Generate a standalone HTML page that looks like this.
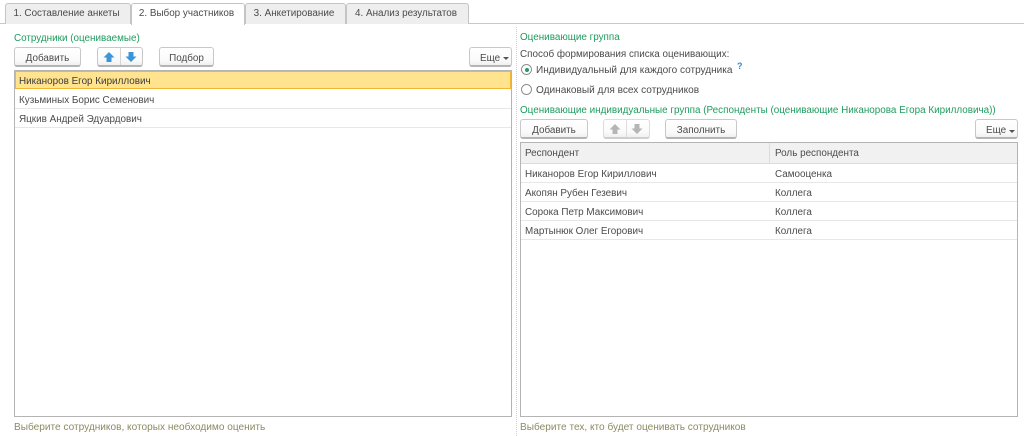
<!DOCTYPE html>
<html lang="ru"><head><meta charset="utf-8"><style>
html,body{margin:0;padding:0;background:#fff}
#p{position:relative;width:1024px;height:436px;overflow:hidden;background:#fff;font:9.9px/16px "Liberation Sans",sans-serif;color:#4b4b4b;filter:blur(.25px)}
#p div,#p span,#p svg{position:absolute;box-sizing:border-box}
.t{white-space:nowrap}
.g{color:#1f9c5e}
.h{color:#8d8a62;font-size:10.1px}
.tab{top:3px;height:21px;background:#eeeeee;border:1px solid #c4c4c4;border-bottom:0;border-radius:3px 3px 0 0;text-align:center;line-height:20px;white-space:nowrap;padding-right:3px}
.btn{background:linear-gradient(#fff,#fafafa 70%,#f0f0f0);border:1px solid #c8c8c8;border-bottom:2px solid #b4b4b4;border-radius:3px;text-align:center;line-height:18px;padding-top:2px;white-space:nowrap}
.line{height:1px;background:#e7e7e7}
.caret{width:0;height:0;border-left:3px solid transparent;border-right:3px solid transparent;border-top:3px solid #555}
</style></head><body><div id="p">
<div style="left:0;top:23px;width:1024px;height:1px;background:#c8c8c8"></div>
<div class="tab" style="left:5px;width:126px">1. Составление анкеты</div>
<div class="tab" style="left:131px;width:114px;background:#fff;height:22px;z-index:2">2. Выбор участников</div>
<div class="tab" style="left:245px;width:101px">3. Анкетирование</div>
<div class="tab" style="left:346px;width:123px">4. Анализ результатов</div>

<div class="t g" style="left:14px;top:31px">Сотрудники (оцениваемые)</div>
<div class="btn" style="left:14px;top:47px;width:67px;height:20px">Добавить</div>
<div class="btn" style="left:97px;top:47px;width:46px;height:20px"></div>
<div style="left:120px;top:48px;width:1px;height:17px;background:#d5d5d5"></div>
<svg style="left:103px;top:51px" width="12" height="12" viewBox="0 0 12 12"><path d="M6 1 L11.5 6.5 H8.5 V11 H3.5 V6.5 H.5 Z" fill="#3a96d6"/></svg>
<svg style="left:125px;top:51px" width="12" height="12" viewBox="0 0 12 12"><path d="M6 11 L11.5 5.5 H8.5 V1 H3.5 V5.5 H.5 Z" fill="#3a96d6"/></svg>
<div class="btn" style="left:159px;top:47px;width:55px;height:20px">Подбор</div>
<div class="btn" style="left:469px;top:47px;width:43px;height:20px;text-align:left;padding-left:10px">Еще</div>
<div class="caret" style="left:503px;top:57px"></div>

<div style="left:14px;top:70px;width:498px;height:347px;border:1px solid #b4b4b4;background:#fff"></div>
<div style="left:15px;top:71px;width:496px;height:18px;background:#ffe38f;border:1px solid #f2b632"></div>
<div class="t" style="left:19px;top:74px;color:#3c3c3c">Никаноров Егор Кириллович</div>
<div class="line" style="left:15px;top:108px;width:496px"></div>
<div class="t" style="left:19px;top:93px">Кузьминых Борис Семенович</div>
<div class="line" style="left:15px;top:127px;width:496px"></div>
<div class="t" style="left:19px;top:112px">Яцкив Андрей Эдуардович</div>
<div class="t h" style="left:14px;top:420px">Выберите сотрудников, которых необходимо оценить</div>

<div style="left:516px;top:27px;width:0;height:409px;border-left:1px dotted #cfcfcf"></div>

<div class="t g" style="left:520px;top:30px">Оценивающие группа</div>
<div class="t" style="left:520px;top:47px">Способ формирования списка оценивающих:</div>
<div style="left:521px;top:64px;width:11px;height:11px;border:1px solid #8f8f8f;border-radius:50%;background:#fff"></div>
<div style="left:525px;top:68px;width:4px;height:4px;border-radius:50%;background:#1f9c5e"></div>
<div class="t" style="left:536px;top:63px;font-size:10.05px">Индивидуальный для каждого сотрудника</div>
<div class="t" style="left:737px;top:58px;color:#2a8fd0;font-weight:bold;font-size:9px">?</div>
<div style="left:521px;top:84px;width:11px;height:11px;border:1px solid #8f8f8f;border-radius:50%;background:#fff"></div>
<div class="t" style="left:536px;top:83px;font-size:10.1px">Одинаковый для всех сотрудников</div>
<div class="t g" style="left:520px;top:103px">Оценивающие индивидуальные группа (Респонденты (оценивающие Никанорова Егора Кирилловича))</div>

<div class="btn" style="left:520px;top:119px;width:68px;height:20px">Добавить</div>
<div class="btn" style="left:603px;top:119px;width:47px;height:20px;border-color:#dcdcdc;border-bottom-color:#cfcfcf"></div>
<div style="left:626px;top:120px;width:1px;height:17px;background:#dedede"></div>
<svg style="left:609px;top:123px" width="12" height="12" viewBox="0 0 12 12"><path d="M6 1 L11.5 6.5 H8.5 V11 H3.5 V6.5 H.5 Z" fill="#b5b5b5"/></svg>
<svg style="left:631px;top:123px" width="12" height="12" viewBox="0 0 12 12"><path d="M6 11 L11.5 5.5 H8.5 V1 H3.5 V5.5 H.5 Z" fill="#b5b5b5"/></svg>
<div class="btn" style="left:665px;top:119px;width:72px;height:20px">Заполнить</div>
<div class="btn" style="left:975px;top:119px;width:43px;height:20px;text-align:left;padding-left:10px">Еще</div>
<div class="caret" style="left:1009px;top:130px"></div>

<div style="left:520px;top:142px;width:498px;height:275px;border:1px solid #b4b4b4;background:#fff"></div>
<div style="left:521px;top:143px;width:496px;height:21px;background:#f1f1f1;border-bottom:1px solid #dcdcdc"></div>
<div style="left:769px;top:143px;width:1px;height:21px;background:#dcdcdc"></div>
<div class="t" style="left:525px;top:146px">Респондент</div>
<div class="t" style="left:775px;top:146px">Роль респондента</div>
<div class="t" style="left:525px;top:167px">Никаноров Егор Кириллович</div><div class="t" style="left:775px;top:167px">Самооценка</div>
<div class="line" style="left:521px;top:182px;width:496px"></div>
<div class="t" style="left:525px;top:186px">Акопян Рубен Гезевич</div><div class="t" style="left:775px;top:186px">Коллега</div>
<div class="line" style="left:521px;top:201px;width:496px"></div>
<div class="t" style="left:525px;top:205px">Сорока Петр Максимович</div><div class="t" style="left:775px;top:205px">Коллега</div>
<div class="line" style="left:521px;top:220px;width:496px"></div>
<div class="t" style="left:525px;top:224px">Мартынюк Олег Егорович</div><div class="t" style="left:775px;top:224px">Коллега</div>
<div class="line" style="left:521px;top:239px;width:496px"></div>
<div class="t h" style="left:520px;top:420px">Выберите тех, кто будет оценивать сотрудников</div>
</div></body></html>
